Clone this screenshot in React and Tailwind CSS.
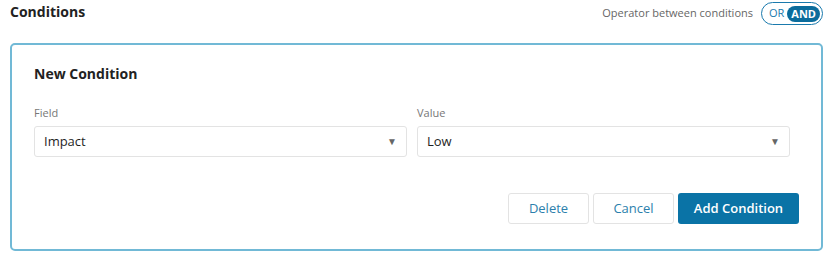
import React from 'react';

const Select = ({ value }) => (
  <div className="flex h-[31px] w-full items-center justify-between rounded-[3px] border border-[#e3e3e3] bg-white pl-[9px] pr-[9px] text-[13px] text-[#1f1f1f]">
    <span>{value}</span>
    <span className="text-[10px] text-[#666]">▼</span>
  </div>
);

const App = () => {
  return (
    <div className="h-[258px] w-[828px] bg-white font-['Open_Sans',sans-serif]">
      {/* Header */}
      <div className="flex h-[43px] items-start justify-between pl-[10px] pr-[5px] pt-[2px]">
        <h2 className="mt-[-2px] text-[14px] font-bold leading-[24px] text-[#222]">Conditions</h2>
        <div className="flex items-center gap-[8px]">
          <span className="text-[11px] text-[#666]">Operator between conditions</span>
          <div className="flex h-[23px] w-[62px] items-center rounded-full border border-[#1a7aad] pl-[7px] pr-[2px] text-[11px]">
            <span className="text-[#1a7aad]">OR</span>
            <span className="ml-auto rounded-full bg-[#0b6c9c] px-[4px] text-[11px] font-bold leading-[16px] text-white">AND</span>
          </div>
        </div>
      </div>

      {/* Card */}
      <div className="ml-[10px] h-[208px] w-[813px] rounded-[5px] border-2 border-[#71b9d6] px-[22px] pt-[18px]">
        <h3 className="text-[14px] font-bold leading-[22px] text-[#222]">New Condition</h3>

        <div className="mt-[20px] flex gap-[10px] pr-[9px]">
          <div className="flex flex-1 flex-col">
            <label className="mb-[5px] text-[11px] leading-[16px] text-[#777]">Field</label>
            <Select value="Impact" />
          </div>
          <div className="flex flex-1 flex-col">
            <label className="mb-[5px] text-[11px] leading-[16px] text-[#777]">Value</label>
            <Select value="Low" />
          </div>
        </div>

        <div className="mt-[36px] flex justify-end gap-[4px] text-[13px]">
          <button className="h-[31px] w-[81px] rounded-[3px] border border-[#e3e3e3] text-[#2c7fac]">Delete</button>
          <button className="h-[31px] w-[81px] rounded-[3px] border border-[#e3e3e3] text-[#2c7fac]">Cancel</button>
          <button className="h-[31px] w-[121px] rounded-[3px] bg-[#0a73a6] font-semibold text-white">Add Condition</button>
        </div>
      </div>
    </div>
  );
};

export default App;
